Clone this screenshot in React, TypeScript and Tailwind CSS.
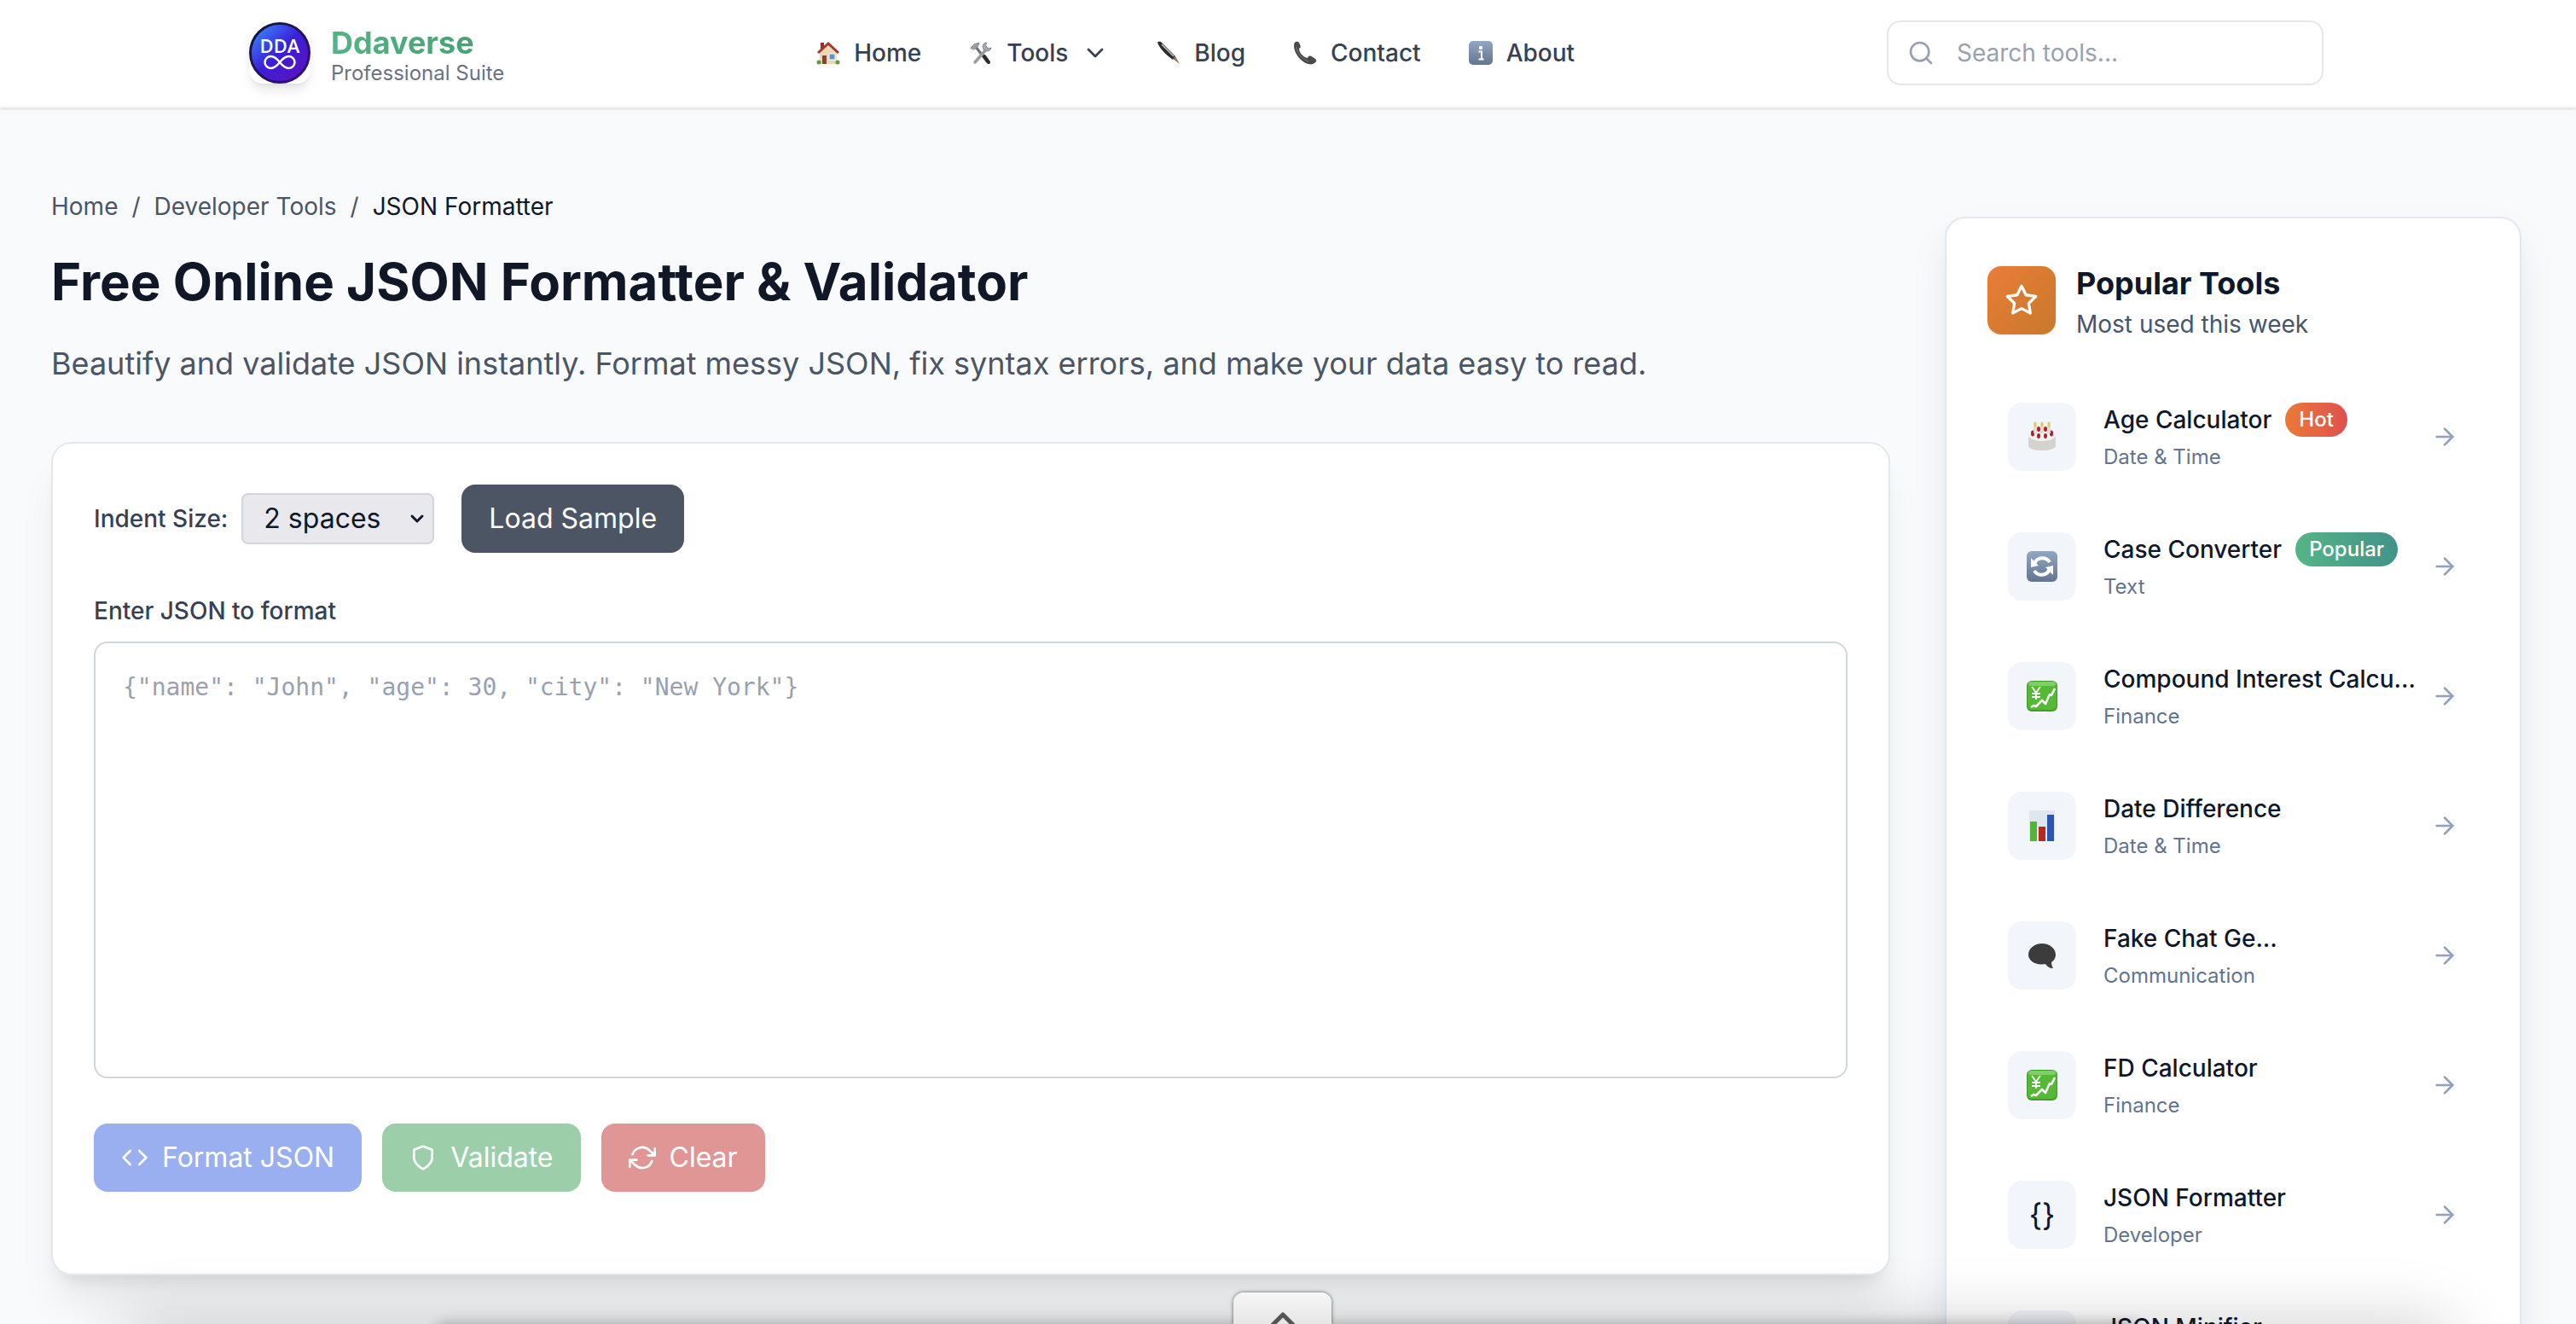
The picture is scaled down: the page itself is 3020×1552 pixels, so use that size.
import { useState, type ReactNode } from "react";
import { FiArrowRight, FiChevronDown, FiChevronUp, FiCode, FiRefreshCw, FiSearch, FiShield, FiStar } from "react-icons/fi";

const SAMPLE = '{"name": "John", "age": 30, "city": "New York"}';

function HouseIcon() {
  return (
    <svg viewBox="0 0 28 28" className="size-7" aria-hidden="true">
      <path d="M5 2h4v7H5z" fill="#7c3a2c" />
      <path d="M4 13 14 4l10 9v14H4z" fill="#ead9b5" />
      <path d="M14 1 1 13l2 2L14 5l11 10 2-2z" fill="#a8362c" />
      <path d="M7 17h5v10H7z" fill="#7d4a2d" />
      <path d="M15 15h7v7h-7z" fill="#5b93cf" stroke="#fff" />
      <circle cx="3" cy="25" r="2.5" fill="#5f9b3c" />
      <circle cx="25" cy="25" r="2.5" fill="#5f9b3c" />
    </svg>
  );
}

function ToolsIcon() {
  return (
    <svg viewBox="0 0 28 28" className="size-7" aria-hidden="true" fill="none" strokeLinecap="round">
      <path d="M8 7 21 24" stroke="#6e7277" strokeWidth="3" />
      <path d="M18 18l5 7" stroke="#2b2b2d" strokeWidth="4" />
      <path d="M2 8l4-4 6-2-2 5-4 3z" fill="#9ba0a6" stroke="#7f858b" />
      <path d="M21 9 7 25" stroke="#9a9ea3" strokeWidth="3.5" />
      <path d="M20 2a5 5 0 1 0 6 6l-4 1-2-3z" fill="#a6abb0" stroke="#7f858b" />
    </svg>
  );
}

function PenIcon() {
  return (
    <svg viewBox="0 0 28 28" className="size-7" aria-hidden="true">
      <path d="M1 2c1-2 4-1 5 0l16 16-3 4C13 18 4 10 1 2z" fill="#2d2d2f" />
      <path d="M6 4l14 14" stroke="#c9cbce" strokeWidth="1.5" />
      <path d="M19 21l3-3 5 9z" fill="#8d7a5f" />
    </svg>
  );
}

function PhoneIcon() {
  return (
    <svg viewBox="0 0 28 28" className="size-7" aria-hidden="true">
      <path
        d="M3 1c2-1 4 0 5 3s1 4-1 5c0 5 5 10 10 11 1-3 3-3 6-1s5 3 4 5c-2 3-6 4-9 3C9 25 1 14 1 6c0-2 0-4 2-5z"
        fill="#4a4a4b"
      />
      <path d="M4 7c0 7 6 14 14 17" fill="none" stroke="#7a7a7b" />
    </svg>
  );
}

function InfoIcon() {
  return (
    <svg viewBox="0 0 28 28" className="size-7" aria-hidden="true">
      <defs>
        <linearGradient id="info-fill" x1="0" y1="0" x2="0" y2="1">
          <stop offset="0" stopColor="#91a7c3" />
          <stop offset="1" stopColor="#63758f" />
        </linearGradient>
      </defs>
      <rect width="28" height="28" rx="5" fill="url(#info-fill)" />
      <circle cx="14" cy="8" r="2.2" fill="#fff" />
      <path d="M11.500 12.500h3.500v9M11.500 21.500h6" fill="none" stroke="#fff" strokeWidth="2" />
    </svg>
  );
}

function CakeIcon() {
  return (
    <svg viewBox="0 0 36 36" className="size-9" aria-hidden="true">
      <path d="M2 16v12c0 4 7 6 16 6s16-2 16-6V16z" fill="#d6d3ce" />
      <ellipse cx="18" cy="16" rx="16" ry="7" fill="#f5f3f0" />
      <g fill="#a91f38">
        <ellipse cx="7" cy="14" rx="2" ry="3.5" />
        <ellipse cx="14" cy="17" rx="2" ry="3" />
        <ellipse cx="22" cy="17" rx="2" ry="3" />
        <ellipse cx="29" cy="14" rx="2" ry="3.5" />
        <ellipse cx="14" cy="9" rx="2" ry="3" />
        <ellipse cx="22" cy="9" rx="2" ry="3" />
      </g>
      <path d="M10 5v9M18 5v9M26 5v9" stroke="#e6dcc6" strokeWidth="4" />
      <path d="M10 2v3M18 2v3M26 2v3" stroke="#dfc95c" strokeWidth="3" strokeLinecap="round" />
    </svg>
  );
}

function CycleIcon() {
  return (
    <svg viewBox="0 0 36 36" className="size-9" aria-hidden="true">
      <defs>
        <linearGradient id="cycle-fill" x1="0" y1="0" x2="0" y2="1">
          <stop offset="0" stopColor="#91a7c3" />
          <stop offset="1" stopColor="#63758f" />
        </linearGradient>
      </defs>
      <rect width="36" height="36" rx="6" fill="url(#cycle-fill)" />
      <g fill="none" stroke="#fff" strokeWidth="4">
        <path d="M9 15a10 10 0 0 1 18-2" />
        <path d="M27 21a10 10 0 0 1-18 2" />
      </g>
      <path d="M5 8v11l9-2z" fill="#fff" />
      <path d="M31 28V17l-9 2z" fill="#fff" />
    </svg>
  );
}

function ChartYenIcon() {
  return (
    <svg viewBox="0 0 36 36" className="size-9" aria-hidden="true">
      <rect width="36" height="36" rx="6" fill="#3f9c28" />
      <rect x="1" y="1" width="34" height="33" rx="5" fill="#55b935" />
      <rect x="2" y="1" width="32" height="5" rx="3" fill="#7fd064" />
      <g fill="none" stroke="#fff" strokeLinejoin="round">
        <path d="M6 7l5 7 5-7M11 14v8M6 15h10M6 19h10" strokeWidth="1.8" />
        <path d="M5 31l3-2 3 1 7-7 4 4 5-11 2 1 4-8" strokeWidth="2.6" />
      </g>
    </svg>
  );
}

function BarsIcon() {
  return (
    <svg viewBox="0 0 36 36" className="size-9" aria-hidden="true">
      <path d="M3 0h30v36H3z" fill="#dfe6ee" />
      <path d="M4 13h8v23H4z" fill="#52b43a" />
      <path d="M14 19h8v17h-8z" fill="#b52a1c" />
      <path d="M24 5h8v31h-8z" fill="#2756b5" />
    </svg>
  );
}

function SpeechIcon() {
  return (
    <svg viewBox="0 0 36 36" className="size-9" aria-hidden="true">
      <path d="M18 4c9 0 16 6 16 13 0 4-2 7-5 9 0 3 1 5 2 7-4 0-7-2-9-5-12 2-20-4-20-11C2 10 9 4 18 4z" fill="#3c3c3c" />
    </svg>
  );
}

function Logo() {
  return (
    <svg viewBox="0 0 72 72" className="size-18 rounded-2xl bg-white shadow-lg" aria-hidden="true">
      <defs>
        <linearGradient id="logo-fill" x1="0.1" y1="0.1" x2="0.85" y2="0.9">
          <stop offset="0" stopColor="#3b82f6" />
          <stop offset="0.5" stopColor="#3a1fd8" />
          <stop offset="1" stopColor="#5b12c4" />
        </linearGradient>
        <linearGradient id="logo-ring" x1="0" y1="0" x2="1" y2="1">
          <stop offset="0" stopColor="#15153a" />
          <stop offset="1" stopColor="#33107e" />
        </linearGradient>
      </defs>
      <circle cx="36" cy="36" r="34.5" fill="url(#logo-fill)" stroke="url(#logo-ring)" strokeWidth="3" />
      <text
        x="36"
        y="36"
        textAnchor="middle"
        fill="#fff"
        className="font-['Open_Sans',sans-serif] text-[22px] font-semibold"
      >
        DDA
      </text>
      <path
        d="M36 47c-4-5-7-7-10.500-7a7 7 0 0 0 0 14c3.500 0 6.500-2 10.500-7s7-7 10.500-7a7 7 0 0 1 0 14c-3.500 0-6.500-2-10.500-7z"
        fill="none"
        stroke="#fff"
        strokeWidth="2.500"
      />
    </svg>
  );
}

const navLinks = [
  { label: "Home", icon: <HouseIcon /> },
  { label: "Tools", icon: <ToolsIcon />, menu: true },
  { label: "Blog", icon: <PenIcon /> },
  { label: "Contact", icon: <PhoneIcon /> },
  { label: "About", icon: <InfoIcon /> },
];

type Tool = {
  name: string;
  category: string;
  icon: ReactNode;
  badge?: "Hot" | "Popular";
};

const popularTools: Tool[] = [
  { name: "Age Calculator", category: "Date & Time", icon: <CakeIcon />, badge: "Hot" },
  { name: "Case Converter", category: "Text", icon: <CycleIcon />, badge: "Popular" },
  { name: "Compound Interest Calcu...", category: "Finance", icon: <ChartYenIcon /> },
  { name: "Date Difference", category: "Date & Time", icon: <BarsIcon /> },
  { name: "Fake Chat Ge...", category: "Communication", icon: <SpeechIcon /> },
  { name: "FD Calculator", category: "Finance", icon: <ChartYenIcon /> },
  { name: "JSON Formatter", category: "Developer", icon: "{}" },
  { name: "JSON Minifier", category: "Developer", icon: "{}" },
];

function Header() {
  return (
    <header className="relative border-b-2 border-[#f1f3f4] bg-white pr-1 shadow-sm">
      <div className="mx-auto flex h-[125px] max-w-[2560px] items-center justify-between px-16 pb-[2px]">
        <a href="#" className="flex items-center gap-6">
          <Logo />
          <span className="flex flex-col pt-2">
            <span className="bg-gradient-to-r from-[#52b585] to-[#479c72] bg-clip-text text-[36px] leading-10 font-bold text-transparent">
              Ddaverse
            </span>
            <span className="text-2xl leading-8 text-gray-500">Professional Suite</span>
          </span>
        </a>
        <nav className="flex items-center gap-14">
          {navLinks.map((link) => (
            <a key={link.label} href="#" className="flex items-center gap-4 text-[28px] leading-10 font-medium text-gray-700">
              {link.icon}
              {link.label}
              {link.menu && <FiChevronDown className="size-8" />}
            </a>
          ))}
        </nav>
        <div className="relative w-[512px]">
          <FiSearch className="absolute top-[22px] left-6 size-8 text-gray-400" />
          <input
            type="search"
            aria-label="Search tools"
            placeholder="Search tools..."
            className="block h-[76px] w-full rounded-2xl border-2 border-gray-200 bg-white pr-6 pl-20 text-[28px] placeholder:text-gray-400"
          />
        </div>
      </div>
    </header>
  );
}

function Formatter() {
  const [json, setJson] = useState("");
  const empty = json === "";

  return (
    <section className="rounded-3xl border-2 border-gray-200 bg-white p-12 shadow-[0_40px_50px_-10px_rgba(0,0,0,0.08),0_16px_20px_-12px_rgba(0,0,0,0.1)]">
      <div className="mb-12 flex items-center gap-8">
        <div className="flex items-center gap-4">
          <label htmlFor="indent" className="text-[28px] leading-10 font-medium text-gray-700">
            Indent Size:
          </label>
          <div className="relative">
            <select
              id="indent"
              className="h-[60px] w-[226px] appearance-none rounded-lg border-2 border-gray-300 bg-[#e9e9ed] px-6 text-[32px] text-gray-900"
            >
              <option>2 spaces</option>
              <option>4 spaces</option>
              <option>Tab</option>
            </select>
            <FiChevronDown className="pointer-events-none absolute top-[18px] right-2 size-6 text-gray-900" strokeWidth={3} />
          </div>
        </div>
        <button onClick={() => setJson(SAMPLE)} className="h-20 rounded-2xl bg-[#4b5563] px-8 text-[32px] text-white">
          Load Sample
        </button>
      </div>

      <label htmlFor="json" className="mb-4 block text-[28px] leading-10 font-medium text-gray-700">
        Enter JSON to format
      </label>
      <textarea
        id="json"
        value={json}
        onChange={(e) => setJson(e.target.value)}
        placeholder={SAMPLE}
        className="mb-[53px] block h-[512px] w-full resize-none rounded-2xl border-2 border-gray-300 p-8 font-['DejaVu_Sans_Mono',monospace] text-[28px] leading-10 placeholder:text-gray-400"
      />

      <div className="mb-12 flex gap-6">
        <button disabled={empty} className="flex h-20 items-center gap-4 rounded-2xl bg-[#9aaff0] px-8 text-[32px] text-white">
          <FiCode className="size-8" />
          Format JSON
        </button>
        <button disabled={empty} className="flex h-20 items-center gap-4 rounded-2xl bg-[#9ccfa9] px-8 text-[32px] text-white">
          <FiShield className="size-8" />
          Validate
        </button>
        <button disabled={empty} className="flex h-20 items-center gap-4 rounded-2xl bg-[#e09694] px-8 text-[32px] text-white">
          <FiRefreshCw className="size-8" />
          Clear
        </button>
      </div>
    </section>
  );
}

function Badge({ kind }: { kind: "Hot" | "Popular" }) {
  const tone = kind === "Hot" ? "from-[#ea7a35] to-[#df4f4d]" : "from-[#54b585] to-[#42938a]";
  return (
    <span className={`shrink-0 rounded-full bg-gradient-to-r px-4 py-1 text-2xl leading-8 font-medium text-white ${tone}`}>
      {kind}
    </span>
  );
}

function PopularTools() {
  return (
    <aside className="w-[676px] shrink-0 self-start rounded-3xl border-2 border-slate-200 bg-white p-12 shadow-[0_20px_50px_-10px_rgba(15,23,42,0.12)]">
      <div className="mb-12 flex items-center gap-6">
        <div className="flex size-20 items-center justify-center rounded-2xl bg-gradient-to-br from-[#ea7c36] to-[#c8792c] shadow-sm">
          <FiStar className="size-10 text-white" />
        </div>
        <div>
          <h2 className="text-[36px] leading-[56px] font-bold text-slate-900">Popular Tools</h2>
          <p className="text-[28px] leading-10 text-slate-600">Most used this week</p>
        </div>
      </div>
      <ul className="flex flex-col gap-6">
        {popularTools.map((tool) => (
          <li key={tool.name}>
            <a href="#" className="flex items-center gap-4 p-6">
              <span className="mr-4 flex size-20 shrink-0 items-center justify-center rounded-2xl bg-[#f2f5fa] text-[36px] text-slate-900">
                {tool.icon}
              </span>
              <span className="min-w-0 flex-1">
                <span className="flex h-10 items-center gap-4">
                  <span className="text-[28px] leading-10 font-medium whitespace-nowrap text-slate-900">{tool.name}</span>
                  {tool.badge && <Badge kind={tool.badge} />}
                </span>
                <span className="mt-2 block text-2xl leading-8 text-slate-500">{tool.category}</span>
              </span>
              <FiArrowRight className="size-8 shrink-0 text-slate-400" />
            </a>
          </li>
        ))}
      </ul>
    </aside>
  );
}

export default function App() {
  return (
    <div className="h-screen overflow-hidden bg-[#f9fafc] font-['Inter',sans-serif]">
      <Header />
      <main className="flex items-start gap-16 pt-[95px] pr-16 pl-[60px]">
        <div className="min-w-0 flex-1">
          <nav aria-label="Breadcrumb" className="mb-6 flex gap-4 text-[28px] leading-10 text-gray-600">
            <a href="#">Home</a>
            <span>/</span>
            <a href="#">Developer Tools</a>
            <span>/</span>
            <span className="text-gray-900">JSON Formatter</span>
          </nav>
          <h1 className="mb-6 text-[60px] leading-[88px] font-bold text-gray-900">
            Free Online JSON Formatter &amp; Validator
          </h1>
          <p className="mb-16 text-[36px] leading-[56px] text-gray-600">
            Beautify and validate JSON instantly. Format messy JSON, fix syntax errors, and make your data easy to read.
          </p>
          <Formatter />
        </div>
        <div className="pt-8">
          <PopularTools />
        </div>
      </main>

      {/* drawer parked just under the fold, only its handle and shadow show */}
      <div className="pointer-events-none fixed inset-x-[5%] top-full h-20 shadow-[0_0_80px_rgba(0,0,0,0.2)]" />
      <div className="pointer-events-none fixed inset-x-[17%] top-full h-20 shadow-[0_0_16px_rgba(0,0,0,0.3)]" />
      <button
        aria-label="Open panel"
        className="fixed bottom-0 left-1/2 flex h-[37px] w-[115px] -translate-x-16 justify-center rounded-t-xl bg-gradient-to-b from-[#f7f7f7] to-[#e6e6e6] pt-2 shadow-[0_0_4px_rgba(0,0,0,0.6)]"
      >
        <FiChevronUp className="size-12 shrink-0 text-[#555]" strokeWidth={2.500} />
      </button>
    </div>
  );
}
